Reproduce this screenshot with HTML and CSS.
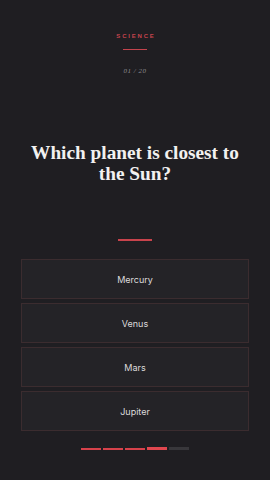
FILE: index.html
```html
<!DOCTYPE html>
<html>
<head>
<meta charset="utf-8">
<link rel="stylesheet" href="styles.css">
</head>
<body>
<div class="screen">
  <div class="category">SCIENCE</div>
  <div class="cat-rule"></div>
  <div class="counter">01 / 20</div>
  <h1 class="question">Which planet is closest to the Sun?</h1>
  <div class="q-rule"></div>
  <div class="answers">
    <div class="answer">Mercury</div>
    <div class="answer">Venus</div>
    <div class="answer">Mars</div>
    <div class="answer">Jupiter</div>
  </div>
  <div class="progress">
    <span class="seg done"></span>
    <span class="seg done"></span>
    <span class="seg done"></span>
    <span class="seg current"></span>
    <span class="seg todo"></span>
  </div>
</div>
</body>
</html>
```
FILE: styles.css
```css
html, body {
  margin: 0;
  padding: 0;
  background: #1f1e22;
}
.screen {
  width: 270px;
  height: 480px;
  display: flex;
  flex-direction: column;
  align-items: center;
  padding: 0 21px;
  box-sizing: border-box;
}
.category {
  margin-top: 32px;
  font-family: "Liberation Sans", Arial, sans-serif;
  font-weight: bold;
  font-size: 6px;
  line-height: 8px;
  letter-spacing: 1.8px;
  padding-left: 2px;
  color: #c4444d;
}
.cat-rule {
  margin-top: 9px;
  width: 24px;
  height: 1px;
  background: #c4444d;
}
.counter {
  margin-top: 17px;
  font-family: "Liberation Serif", "Times New Roman", serif;
  font-style: italic;
  font-size: 7px;
  line-height: 9px;
  color: #8d8b90;
  letter-spacing: 0.5px;
}
.question {
  margin: 66px 0 0;
  font-family: "Liberation Serif", "Times New Roman", serif;
  font-weight: bold;
  font-size: 19.3px;
  line-height: 21px;
  color: #f2f1f0;
  text-align: center;
}
.q-rule {
  margin-top: 55px;
  width: 34px;
  height: 2px;
  background: #c8434c;
}
.answers {
  margin-top: 18px;
  width: 100%;
  display: flex;
  flex-direction: column;
  gap: 4px;
}
.answer {
  height: 40px;
  box-sizing: border-box;
  border: 1px solid #3b2c2f;
  background: #242327;
  display: flex;
  align-items: center;
  justify-content: center;
  font-family: "Inter", "Liberation Sans", sans-serif;
  font-size: 9px;
  color: #dcdbdc;
}
.progress {
  margin-top: 16px;
  display: flex;
  align-items: flex-end;
  gap: 2px;
}
.seg {
  display: block;
  width: 20px;
  height: 2px;
  background: #d6424b;
}
.seg.current {
  height: 3px;
  background: #e0474f;
}
.seg.todo {
  height: 3px;
  background: #38373b;
}
```
